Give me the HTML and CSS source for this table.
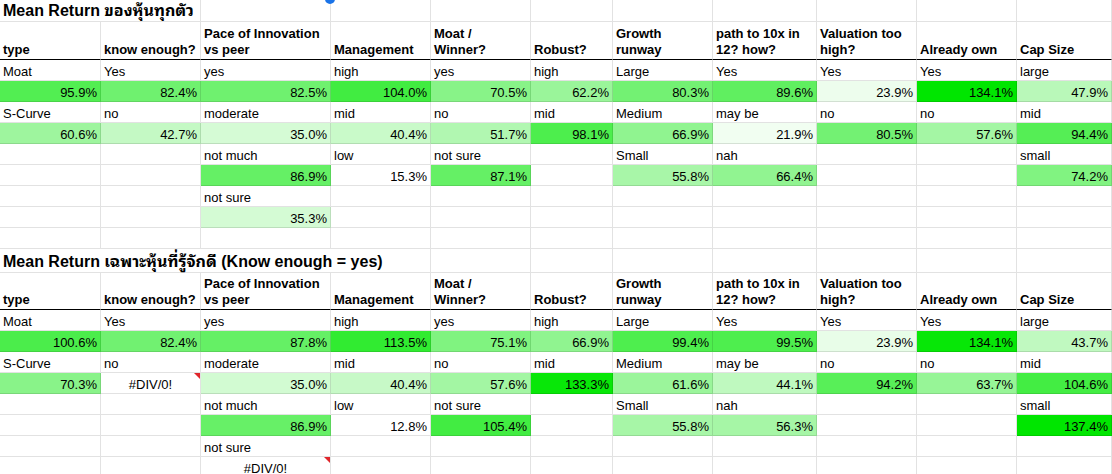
FILE: index.html
```html
<!DOCTYPE html>
<html>
<head>
<meta charset="utf-8">
<link rel="stylesheet" href="styles.css">
</head>
<body>
<div class="sheet">
  <div class="handle"></div>

  <div class="row title first">
    <div class="c t span2">Mean Return ของหุ้นทุกตัว</div>
    <div class="c"></div><div class="c"></div><div class="c"></div><div class="c"></div><div class="c"></div><div class="c"></div><div class="c"></div><div class="c"></div><div class="c"></div>
  </div>
  <div class="row hdr first">
    <div class="c">type</div>
    <div class="c">know enough?</div>
    <div class="c">Pace of Innovation<br>vs peer</div>
    <div class="c">Management</div>
    <div class="c">Moat /<br>Winner?</div>
    <div class="c">Robust?</div>
    <div class="c">Growth<br>runway</div>
    <div class="c">path to 10x in<br>12? how?</div>
    <div class="c">Valuation too<br>high?</div>
    <div class="c">Already own</div>
    <div class="c">Cap Size</div>
  </div>
  <div class="row">
    <div class="c">Moat</div><div class="c">Yes</div><div class="c">yes</div><div class="c">high</div><div class="c">yes</div><div class="c">high</div><div class="c">Large</div><div class="c">Yes</div><div class="c">Yes</div><div class="c">Yes</div><div class="c">large</div>
  </div>
  <div class="row">
    <div class="c v" style="background:rgb(82,238,82)">95.9%</div>
    <div class="c v" style="background:rgb(111,241,111)">82.4%</div>
    <div class="c v" style="background:rgb(111,241,111)">82.5%</div>
    <div class="c v" style="background:rgb(65,236,65)">104.0%</div>
    <div class="c v" style="background:rgb(136,243,136)">70.5%</div>
    <div class="c v" style="background:rgb(154,245,154)">62.2%</div>
    <div class="c v" style="background:rgb(115,241,115)">80.3%</div>
    <div class="c v" style="background:rgb(96,239,96)">89.6%</div>
    <div class="c v" style="background:rgb(237,253,237)">23.9%</div>
    <div class="c v" style="background:rgb(0,230,0)">134.1%</div>
    <div class="c v" style="background:rgb(185,248,185)">47.9%</div>
  </div>
  <div class="row">
    <div class="c">S-Curve</div><div class="c">no</div><div class="c">moderate</div><div class="c">mid</div><div class="c">no</div><div class="c">mid</div><div class="c">Medium</div><div class="c">may be</div><div class="c">no</div><div class="c">no</div><div class="c">mid</div>
  </div>
  <div class="row">
    <div class="c v" style="background:rgb(158,245,158)">60.6%</div>
    <div class="c v" style="background:rgb(196,249,196)">42.7%</div>
    <div class="c v" style="background:rgb(213,251,213)">35.0%</div>
    <div class="c v" style="background:rgb(201,250,201)">40.4%</div>
    <div class="c v" style="background:rgb(177,247,177)">51.7%</div>
    <div class="c v" style="background:rgb(77,238,77)">98.1%</div>
    <div class="c v" style="background:rgb(144,244,144)">66.9%</div>
    <div class="c v" style="background:rgb(241,254,241)">21.9%</div>
    <div class="c v" style="background:rgb(115,241,115)">80.5%</div>
    <div class="c v" style="background:rgb(164,246,164)">57.6%</div>
    <div class="c v" style="background:rgb(85,238,85)">94.4%</div>
  </div>
  <div class="row">
    <div class="c"></div><div class="c"></div><div class="c">not much</div><div class="c">low</div><div class="c">not sure</div><div class="c"></div><div class="c">Small</div><div class="c">nah</div><div class="c"></div><div class="c"></div><div class="c">small</div>
  </div>
  <div class="row">
    <div class="c"></div><div class="c"></div>
    <div class="c v" style="background:rgb(101,240,101)">86.9%</div>
    <div class="c v">15.3%</div>
    <div class="c v" style="background:rgb(101,240,101)">87.1%</div>
    <div class="c"></div>
    <div class="c v" style="background:rgb(168,246,168)">55.8%</div>
    <div class="c v" style="background:rgb(145,244,145)">66.4%</div>
    <div class="c"></div><div class="c"></div>
    <div class="c v" style="background:rgb(129,243,129)">74.2%</div>
  </div>
  <div class="row">
    <div class="c"></div><div class="c"></div><div class="c">not sure</div><div class="c"></div><div class="c"></div><div class="c"></div><div class="c"></div><div class="c"></div><div class="c"></div><div class="c"></div><div class="c"></div>
  </div>
  <div class="row">
    <div class="c"></div><div class="c"></div>
    <div class="c v" style="background:rgb(212,251,212)">35.3%</div>
    <div class="c"></div><div class="c"></div><div class="c"></div><div class="c"></div><div class="c"></div><div class="c"></div><div class="c"></div><div class="c"></div>
  </div>
  <div class="row">
    <div class="c"></div><div class="c"></div><div class="c"></div><div class="c"></div><div class="c"></div><div class="c"></div><div class="c"></div><div class="c"></div><div class="c"></div><div class="c"></div><div class="c"></div>
  </div>

  <div class="row title">
    <div class="c t span4">Mean Return เฉพาะหุ้นที่รู้จักดี (Know enough = yes)</div>
    <div class="c"></div><div class="c"></div><div class="c"></div><div class="c"></div><div class="c"></div><div class="c"></div><div class="c"></div>
  </div>
  <div class="row hdr">
    <div class="c">type</div>
    <div class="c">know enough?</div>
    <div class="c">Pace of Innovation<br>vs peer</div>
    <div class="c">Management</div>
    <div class="c">Moat /<br>Winner?</div>
    <div class="c">Robust?</div>
    <div class="c">Growth<br>runway</div>
    <div class="c">path to 10x in<br>12? how?</div>
    <div class="c">Valuation too<br>high?</div>
    <div class="c">Already own</div>
    <div class="c">Cap Size</div>
  </div>
  <div class="row">
    <div class="c">Moat</div><div class="c">Yes</div><div class="c">yes</div><div class="c">high</div><div class="c">yes</div><div class="c">high</div><div class="c">Large</div><div class="c">Yes</div><div class="c">Yes</div><div class="c">Yes</div><div class="c">large</div>
  </div>
  <div class="row">
    <div class="c v" style="background:rgb(75,237,75)">100.6%</div>
    <div class="c v" style="background:rgb(113,241,113)">82.4%</div>
    <div class="c v" style="background:rgb(101,240,101)">87.8%</div>
    <div class="c v" style="background:rgb(49,235,49)">113.5%</div>
    <div class="c v" style="background:rgb(128,243,128)">75.1%</div>
    <div class="c v" style="background:rgb(144,244,144)">66.9%</div>
    <div class="c v" style="background:rgb(78,238,78)">99.4%</div>
    <div class="c v" style="background:rgb(78,238,78)">99.5%</div>
    <div class="c v" style="background:rgb(232,253,232)">23.9%</div>
    <div class="c v" style="background:rgb(7,231,7)">134.1%</div>
    <div class="c v" style="background:rgb(192,249,192)">43.7%</div>
  </div>
  <div class="row">
    <div class="c">S-Curve</div><div class="c">no</div><div class="c">moderate</div><div class="c">mid</div><div class="c">no</div><div class="c">mid</div><div class="c">Medium</div><div class="c">may be</div><div class="c">no</div><div class="c">no</div><div class="c">mid</div>
  </div>
  <div class="row">
    <div class="c v" style="background:rgb(137,243,137)">70.3%</div>
    <div class="c err">#DIV/0!</div>
    <div class="c v" style="background:rgb(210,251,210)">35.0%</div>
    <div class="c v" style="background:rgb(199,249,199)">40.4%</div>
    <div class="c v" style="background:rgb(163,246,163)">57.6%</div>
    <div class="c v" style="background:rgb(8,231,8)">133.3%</div>
    <div class="c v" style="background:rgb(155,245,155)">61.6%</div>
    <div class="c v" style="background:rgb(191,249,191)">44.1%</div>
    <div class="c v" style="background:rgb(88,239,88)">94.2%</div>
    <div class="c v" style="background:rgb(151,245,151)">63.7%</div>
    <div class="c v" style="background:rgb(67,237,67)">104.6%</div>
  </div>
  <div class="row">
    <div class="c"></div><div class="c"></div><div class="c">not much</div><div class="c">low</div><div class="c">not sure</div><div class="c"></div><div class="c">Small</div><div class="c">nah</div><div class="c"></div><div class="c"></div><div class="c">small</div>
  </div>
  <div class="row">
    <div class="c"></div><div class="c"></div>
    <div class="c v" style="background:rgb(103,240,103)">86.9%</div>
    <div class="c v">12.8%</div>
    <div class="c v" style="background:rgb(66,236,66)">105.4%</div>
    <div class="c"></div>
    <div class="c v" style="background:rgb(167,246,167)">55.8%</div>
    <div class="c v" style="background:rgb(166,246,166)">56.3%</div>
    <div class="c"></div><div class="c"></div>
    <div class="c v" style="background:rgb(0,230,0)">137.4%</div>
  </div>
  <div class="row">
    <div class="c"></div><div class="c"></div><div class="c">not sure</div><div class="c"></div><div class="c"></div><div class="c"></div><div class="c"></div><div class="c"></div><div class="c"></div><div class="c"></div><div class="c"></div>
  </div>
  <div class="row">
    <div class="c"></div><div class="c"></div>
    <div class="c err">#DIV/0!</div>
    <div class="c"></div><div class="c"></div><div class="c"></div><div class="c"></div><div class="c"></div><div class="c"></div><div class="c"></div><div class="c"></div>
  </div>
</div>
</body>
</html>
```
FILE: styles.css
```css
html, body {
  margin: 0;
  padding: 0;
  background: #ffffff;
  overflow: hidden;
}

.sheet {
  position: relative;
  display: flex;
  flex-direction: column;
  width: 1112px;
  font-family: "Liberation Sans", Arial, "Noto Sans Thai Looped", "Loma", "Garuda", "Noto Sans Thai", "Noto Sans", sans-serif;
  font-size: 13px;
  color: #000000;
}

.row {
  display: grid;
  grid-template-columns: 101px 100px 130px 100px 100px 82px 100px 104px 100px 100px 1fr;
}

.c {
  box-sizing: border-box;
  height: 21px;
  padding: 0 3px 1px 3px;
  border-right: 1px solid rgba(0, 0, 0, 0.115);
  border-bottom: 1px solid rgba(0, 0, 0, 0.115);
  display: flex;
  align-items: flex-end;
  line-height: 15px;
  white-space: nowrap;
  overflow: hidden;
}

.v {
  justify-content: flex-end;
}

.err {
  position: relative;
  justify-content: center;
}

.err::after {
  content: "";
  position: absolute;
  top: 0;
  right: 0;
  width: 0;
  height: 0;
  border-left: 6px solid transparent;
  border-top: 6px solid #e0262b;
}

.title .c {
  height: 24px;
}

.title.first .c {
  height: 22px;
}

.title .t {
  font-weight: bold;
  font-size: 16px;
  line-height: 18px;
  overflow: visible;
}

.span2 {
  grid-column: span 2;
}

.span4 {
  grid-column: span 4;
}

.hdr .c {
  height: 37px;
  font-weight: bold;
  line-height: 16px;
  white-space: nowrap;
  border-bottom: 1px solid #000000;
}

.hdr.first .c {
  height: 38px;
}

.handle {
  position: absolute;
  left: 325px;
  top: -6px;
  width: 10px;
  height: 10px;
  border-radius: 50%;
  background: #1a73e8;
  z-index: 2;
}
```
